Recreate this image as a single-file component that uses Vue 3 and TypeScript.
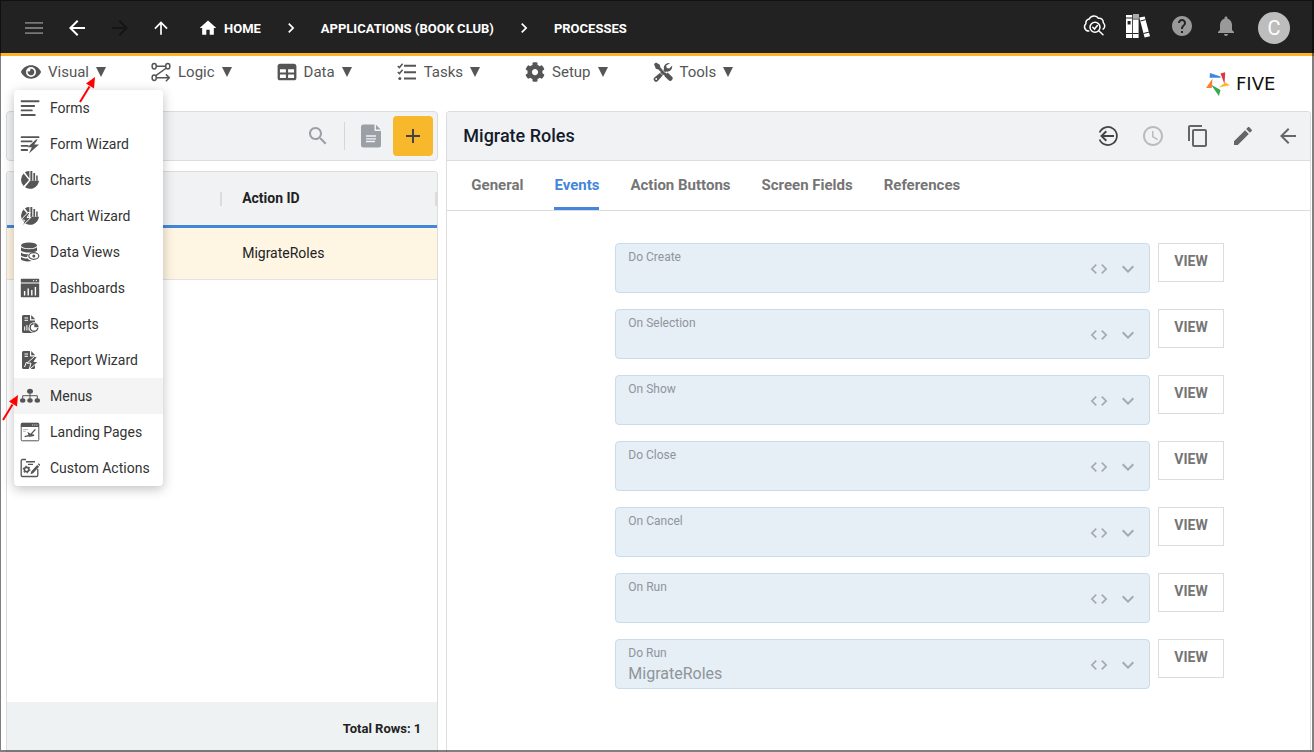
<script setup lang="ts">
import { ref } from 'vue'

interface MenuEntry {
  label: string
  icon: string
}

interface EventField {
  id: string
  label: string
  value: string
}

const eye =
  '<svg x="0" y="0" width="20" height="20" viewBox="0 0 576 512"><path d="M572.52 241.4C518.29 135.59 410.93 64 288 64S57.68 135.64 3.48 241.41a32.35 32.35 0 0 0 0 29.19C57.71 376.41 165.07 448 288 448s230.32-71.64 284.52-177.41a32.35 32.35 0 0 0 0-29.19zM288 400a144 144 0 1 1 144-144 143.93 143.93 0 0 1-144 144zm0-240a95.31 95.31 0 0 0-25.31 3.79 47.85 47.85 0 0 1-66.9 66.9A95.78 95.78 0 1 0 288 160z"/></svg>'
const table =
  '<svg x="0" y="0" width="20" height="20" viewBox="-16 0 544 512"><path d="M448 32H64C28 32 0 60 0 96v320c0 36 28 64 64 64h384c36 0 64-28 64-64V96c0-36-28-64-64-64zM226 416H64v-90h162v90zm0-148H64v-90h162v90zm222 148H286v-90h162v90zm0-148H286v-90h162v90z"/></svg>'
const cog =
  '<svg x="0" y="0" width="20" height="20" viewBox="0 0 512 512"><path d="M487.4 315.7l-42.6-24.6c4.3-23.2 4.3-47 0-70.2l42.6-24.6c4.9-2.8 7.1-8.6 5.5-14-11.1-35.6-30-67.8-54.7-94.6-3.8-4.1-10-5.1-14.8-2.3L380.8 110c-17.9-15.4-38.5-27.3-60.8-35.1V25.8c0-5.6-3.9-10.5-9.4-11.7-36.7-8.2-74.3-7.8-109.2 0-5.5 1.2-9.4 6.1-9.4 11.7V75c-22.2 7.9-42.8 19.8-60.8 35.1L88.7 85.5c-4.9-2.8-11-1.9-14.8 2.3-24.7 26.7-43.6 58.9-54.7 94.6-1.7 5.4.6 11.2 5.5 14L67.3 221c-4.3 23.2-4.3 47 0 70.2l-42.6 24.6c-4.9 2.8-7.1 8.6-5.5 14 11.1 35.6 30 67.8 54.7 94.6 3.8 4.1 10 5.1 14.8 2.3l42.6-24.6c17.9 15.4 38.5 27.3 60.8 35.1v49.2c0 5.6 3.9 10.5 9.4 11.7 36.7 8.2 74.3 7.8 109.2 0 5.5-1.2 9.4-6.1 9.4-11.7v-49.2c22.2-7.9 42.8-19.8 60.8-35.1l42.6 24.6c4.9 2.8 11 1.9 14.8-2.3 24.7-26.7 43.6-58.9 54.7-94.6 1.5-5.5-.7-11.3-5.6-14.1zM256 336c-44.1 0-80-35.9-80-80s35.9-80 80-80 80 35.9 80 80-35.9 80-80 80z"/></svg>'
const logic =
  '<g fill="none" stroke="currentColor" stroke-width="1.5"><ellipse cx="3.2" cy="4.2" rx="2.1" ry="2.7"/><ellipse cx="16.8" cy="4.2" rx="2.1" ry="2.7"/><ellipse cx="3.2" cy="15.8" rx="2.1" ry="2.7"/><path d="M5.3 4.2h9.4M15.4 6L4.8 13.6M5.3 15.8h12.4M14.9 12.4l3.4 3.4-3.4 3.4"/></g>'
const tasks =
  '<path d="M7 2.8h12v2H7zM7 9.2h12v2H7zM7 15.4h12v2H7z"/><circle cx="2.8" cy="16.4" r="1.5"/><path d="M.8 4l1.6 1.6 3.2-3.8M.8 10l1.6 1.6 3.2-3.8" fill="none" stroke="currentColor" stroke-width="1.5"/>'
const tools =
  '<path d="M1 2l2-1.6 3.8 2.4.6 2.6 9 9-2 2-9-9-2.6-.6z"/><path d="M12.6 12.4l2-2 4.2 4.2a2.3 2.3 0 0 1-3.2 3.6l-4-4z"/><path d="M17 1.2a5 5 0 0 0-6 6.2L1.4 15.6a2.4 2.4 0 0 0 3.4 3.4l8.4-9.4a5 5 0 0 0 5.9-5.9l-2.9 2.9-2.5-.5-.5-2.5z"/><path d="M6.6 10.2l3.4 3.4M9.2 7.6l3.4 3.4" stroke="#fff" stroke-width=".7"/><circle cx="3.2" cy="17" r=".9" fill="#fff"/>'

const bolt = 'M16 5.5L7.5 13.2h4.3L9 19.5l10-9h-4.8l3.5-5z'
const pie =
  '<path d="M9 10L3.6 3.4A9 9 0 0 0 3.6 16z"/><path d="M10.2 10.8L5 17.3A9 9 0 0 0 19 10.8z"/><path d="M4.9 2.3A9 9 0 0 1 9.4 1v7.4zM10.4 1h1.9v9.8h-1.9zM13.4 3h1.7v7.8h-1.7zM16.2 5.4h1.5v5.4h-1.5z"/>'
const page =
  '<path d="M2 2.5A1.5 1.5 0 0 1 3.5 1H10v5.5h5V18a1 1 0 0 1-1 1H3.5A1.5 1.5 0 0 1 2 17.5z"/><path d="M11.2 1l4 4.3h-4z"/><path d="M4.5 4h3.5M4.5 6.3h3.5" stroke="#fff" stroke-width="1"/>'

const visualMenu: MenuEntry[] = [
  {
    label: 'Forms',
    icon: '<path d="M1.6 3.2h17M1.6 8h12.6M1.6 12.4h10.2M1.6 17h13.2" stroke="currentColor" stroke-width="1.9" stroke-linecap="round"/>',
  },
  {
    label: 'Form Wizard',
    icon: `<path d="M1.6 3.2h17M1.6 7.4h10M1.6 11.8h6.2M1.6 16h5.6" stroke="currentColor" stroke-width="1.8" stroke-linecap="round"/><path d="${bolt}"/>`,
  },
  { label: 'Charts', icon: pie },
  {
    label: 'Chart Wizard',
    icon: `${pie}<path d="M8 6.5L.8 14h3.6l-2 6 8.4-8.5H7l3.2-5z" stroke="#fff" stroke-width="1"/>`,
  },
  {
    label: 'Data Views',
    icon: '<ellipse cx="9" cy="3.4" rx="8" ry="2.9"/><path d="M1 5.2c2 2.6 14 2.6 16 0v3.6c-2.5 2.4-13.5 2.4-16 0zM1 10.4c2 1.5 5 2 7.5 1.9-1 1-1.5 2-1.3 2.6C4.5 15 2 14.4 1 13.4zM1 15c2 1.3 4.5 1.6 6.8 1.5 1 1.3 2.2 2.1 4 2.5C7 20 2.5 19.2 1 17.6z"/><ellipse cx="13.8" cy="14" rx="5" ry="3.3" fill="none" stroke="currentColor" stroke-width="1.2"/><circle cx="13.8" cy="14" r="1.5"/>',
  },
  {
    label: 'Dashboards',
    icon: '<path d="M1.5.8h17a.7.7 0 0 1 .7.7v3H.8v-3a.7.7 0 0 1 .7-.7zM.8 5.6h18.4v13a.7.7 0 0 1-.7.7h-17a.7.7 0 0 1-.7-.7z"/><path d="M4.6 17.5V13M8.2 17.5v-7M11.8 17.5V12M15.4 17.5V9" stroke="#fff" stroke-width="1.4"/><path d="M13 2.7h1.2M15.8 2.7h1.2" stroke="#fff" stroke-width="1"/>',
  },
  {
    label: 'Reports',
    icon: `${page}<path d="M4.7 16.5v-4M6.9 16.5V11M9 16.5v-3" stroke="#fff" stroke-width="1"/><circle cx="14" cy="13.5" r="5.3" fill="#fff"/><circle cx="14" cy="13.5" r="3.8" fill="none" stroke="currentColor" stroke-width="1.4"/><path d="M14 13.5V8.6a5 5 0 0 1 5 4.9z" stroke="#fff" stroke-width=".6"/>`,
  },
  {
    label: 'Report Wizard',
    icon: `${page}<path d="M4.5 17l2-5" stroke="#fff" stroke-width="1"/><path d="M14.5 6.5L7 13.2h4L9 19.8l9.5-8.3H14l3.5-5z" stroke="#fff" stroke-width="1"/>`,
  },
  {
    label: 'Menus',
    icon: '<ellipse cx="10" cy="5.2" rx="3" ry="2.5"/><ellipse cx="2.7" cy="14.5" rx="2.7" ry="2.2"/><ellipse cx="10" cy="14.5" rx="2.7" ry="2.2"/><ellipse cx="17.3" cy="14.5" rx="2.7" ry="2.2"/><path d="M10 6v7M2.7 13V9.7h14.6V13" fill="none" stroke="currentColor" stroke-width="1"/>',
  },
  {
    label: 'Landing Pages',
    icon: '<rect x="1.2" y="1.2" width="17.6" height="17.6" rx="1" fill="none" stroke="currentColor" stroke-width="1"/><path d="M1 1h18v4H1z"/><path d="M12 3h1.2M14.2 3h1.2M16.4 3h1.2" stroke="#fff" stroke-width=".8"/><path d="M3 7.5h5M3 9.3h3" stroke="currentColor" stroke-opacity=".5" stroke-width=".8"/><path d="M15.4 7.4L10.6 12.6l-2-1.2.6 2L4.6 14.6M10.6 12.8l3.4.4-5 1.2" fill="none" stroke="currentColor" stroke-width="1.4"/>',
  },
  {
    label: 'Custom Actions',
    icon: '<path d="M6 1.5H2.5a1.3 1.3 0 0 0-1.3 1.3v14.4a1.3 1.3 0 0 0 1.3 1.3h14a1.3 1.3 0 0 0 1.3-1.3V11" fill="none" stroke="currentColor" stroke-width="1.3"/><path d="M6 3.8h9M8 6.4h5" stroke="currentColor" stroke-width="1.4"/><circle cx="6.6" cy="11.6" r="2.2" fill="none" stroke="currentColor" stroke-width="1.6"/><circle cx="6.6" cy="11.6" r="3.3" fill="none" stroke="currentColor" stroke-width="1.2" stroke-dasharray="1.5 1.95"/><path d="M10.5 16.2l.7-2.7 6-6.6 1.9 1.8-6 6.6zM17.8 6.2l.9-.9 1.7 1.7-.8.9z"/>',
  },
]

const mainMenu: MenuEntry[] = [
  { label: 'Visual', icon: eye },
  { label: 'Logic', icon: logic },
  { label: 'Data', icon: table },
  { label: 'Tasks', icon: tasks },
  { label: 'Setup', icon: cog },
  { label: 'Tools', icon: tools },
]

const openMenu = ref('Visual')
const hoveredEntry = ref('Menus')

const tabs = ['General', 'Events', 'Action Buttons', 'Screen Fields', 'References']
const activeTab = ref('Events')

const fields = ref<EventField[]>([
  { id: 'do-create', label: 'Do Create', value: '' },
  { id: 'on-selection', label: 'On Selection', value: '' },
  { id: 'on-show', label: 'On Show', value: '' },
  { id: 'do-close', label: 'Do Close', value: '' },
  { id: 'on-cancel', label: 'On Cancel', value: '' },
  { id: 'on-run', label: 'On Run', value: '' },
  { id: 'do-run', label: 'Do Run', value: 'MigrateRoles' },
])

const rows = ref([{ title: '', actionId: 'MigrateRoles' }])
</script>

<template>
  <div class="app">
    <header class="topbar">
      <div class="nav-icons">
        <button class="icon-btn dim" aria-label="Menu">
          <svg width="24" height="24" viewBox="0 0 24 24"><path d="M3 6h18v1.8H3zM3 11.1h18v1.8H3zM3 16.2h18V18H3z" /></svg>
        </button>
        <button class="icon-btn" aria-label="Back">
          <svg width="24" height="24" viewBox="0 0 24 24"><path d="M20 11H7.83l5.59-5.59L12 4l-8 8 8 8 1.41-1.41L7.83 13H20v-2z" /></svg>
        </button>
        <button class="icon-btn off" aria-label="Forward">
          <svg width="24" height="24" viewBox="0 0 24 24"><path d="M12 4l-1.41 1.41L16.17 11H4v2h12.17l-5.58 5.59L12 20l8-8z" /></svg>
        </button>
        <button class="icon-btn" aria-label="Up">
          <svg width="20" height="20" viewBox="0 0 24 24"><path d="M4 12l1.41 1.41L11 7.83V20h2V7.83l5.58 5.59L20 12l-8-8-8 8z" /></svg>
        </button>
      </div>
      <nav class="crumbs" aria-label="Breadcrumb">
        <a href="#home">
          <svg width="20" height="20" viewBox="0 0 24 24"><path d="M10 20v-6h4v6h5v-8h3L12 3 2 12h3v8z" /></svg>
          HOME
        </a>
        <svg width="20" height="20" viewBox="0 0 24 24"><path d="M10 6L8.59 7.41 13.17 12l-4.58 4.59L10 18l6-6z" /></svg>
        <a href="#applications">APPLICATIONS (BOOK CLUB)</a>
        <svg width="20" height="20" viewBox="0 0 24 24"><path d="M10 6L8.59 7.41 13.17 12l-4.58 4.59L10 18l6-6z" /></svg>
        <a href="#processes">PROCESSES</a>
      </nav>
      <div class="account">
        <button class="icon-btn" aria-label="Inspect cloud">
          <svg width="24" height="24" viewBox="0 0 24 24" fill="none" stroke="currentColor" stroke-width="1.5" stroke-linecap="round">
            <path d="M6.8 17A4.2 4.2 0 0 1 3.9 9.7 4.3 4.3 0 0 1 7.2 5C9 1.3 14.6 1.1 16.4 4.3c3-.4 5 1.400 4.9 4.4 1.900 1.600 2 5-.2 6.400" />
            <circle cx="13" cy="13.2" r="5" />
            <path d="M17 17l4 3.8M10.8 13.2l1.7 1.8 2.9-3.5" />
          </svg>
        </button>
        <button class="icon-btn" aria-label="Library">
          <svg width="24" height="24" viewBox="0 0 24 24">
            <path d="M0 1h6.2v23H0zM7 0h5.600v24H7zM13.3 3.600l5.400-1.200L24 22.200l-5.400 1.400z" />
            <path d="M0 4h6.2M0 19.5h6.2M7 5h5.6M7 19.5h5.6M14.3 7l5.4-1.4M17.4 19.5l5.6-1.4" stroke="#222" stroke-width="1" />
            <path d="M1.6 7h3v3.5h-3z" fill="#222" />
            <path d="M7 0h5.6v4H7z" fill="#aaa" />
          </svg>
        </button>
        <button class="icon-btn soft" aria-label="Help">
          <svg width="24" height="24" viewBox="0 0 24 24"><path d="M12 2C6.48 2 2 6.48 2 12s4.48 10 10 10 10-4.48 10-10S17.52 2 12 2zm1 17h-2v-2h2v2zm2.07-7.75l-.9.92C13.45 12.9 13 13.5 13 15h-2v-.5c0-1.1.45-2.1 1.17-2.83l1.24-1.26c.37-.36.59-.86.59-1.41 0-1.1-.9-2-2-2s-2 .9-2 2H8c0-2.21 1.79-4 4-4s4 1.79 4 4c0 .88-.36 1.68-.93 2.25z" /></svg>
        </button>
        <button class="icon-btn soft" aria-label="Notifications">
          <svg width="24" height="24" viewBox="0 0 24 24"><path d="M12 22c1.1 0 2-.9 2-2h-4c0 1.1.89 2 2 2zm6-6v-5c0-3.07-1.64-5.64-4.5-6.32V4c0-.83-.67-1.5-1.5-1.5s-1.5.67-1.5 1.5v.68C7.63 5.36 6 7.92 6 11v5l-2 2v1h16v-1l-2-2z" /></svg>
        </button>
        <button class="avatar">C</button>
      </div>
    </header>

    <div class="menubar">
      <nav class="main-menu" aria-label="Main">
        <div v-for="item in mainMenu" :key="item.label" class="main-item">
          <button class="main-btn" @click="openMenu = item.label">
            <svg width="20" height="20" viewBox="0 0 20 20" v-html="item.icon"></svg>
            <span>{{ item.label }}</span>
            <svg width="10" height="10" viewBox="0 0 10 10"><path d="M0 0h10L5 10z" /></svg>
          </button>
          <template v-if="item.label === 'Visual' && openMenu === 'Visual'">
            <ul class="dropdown">
              <li v-for="entry in visualMenu" :key="entry.label">
                <button
                  class="entry"
                  :class="{ hovered: hoveredEntry === entry.label }"
                  @mouseenter="hoveredEntry = entry.label"
                >
                  <svg width="20" height="20" viewBox="0 0 20 20" v-html="entry.icon"></svg>
                  {{ entry.label }}
                </button>
                <svg v-if="entry.label === 'Menus'" class="pointer at-entry" width="18" height="26" viewBox="0 0 18 26">
                  <path d="M2 25L11.5 9.5" stroke="#f00" stroke-width="2" />
                  <path d="M17 0L8 6.5l8 5z" fill="#f00" />
                </svg>
              </li>
            </ul>
            <svg class="pointer at-caret" width="18" height="26" viewBox="0 0 18 26">
              <path d="M2 25L11.5 9.5" stroke="#f00" stroke-width="2" />
              <path d="M17 0L8 6.5l8 5z" fill="#f00" />
            </svg>
          </template>
        </div>
      </nav>
      <div class="brand">
        <svg width="24" height="24" viewBox="0 0 24 24">
          <path d="M4 1l10.5 3.5v1.3H3.6z" fill="#3f86dc" />
          <path d="M14.5 1.5L19.2.2l-.7 12z" fill="#e5343a" />
          <path d="M12.8 15.5l6.5-5 4.7 2.8z" fill="#fbb829" />
          <path d="M5 12.5l9.5 5.5-1.6 6z" fill="#37a853" />
          <path d="M0 16L6.5 6.500 5.8 16z" fill="#f58233" />
        </svg>
        <span class="wordmark">FIVE</span>
      </div>
    </div>

    <main class="workspace">
      <section class="list-pane">
        <div class="search-card">
          <input type="search" aria-label="Search actions" />
          <button class="icon-btn muted" aria-label="Search">
            <svg width="24" height="24" viewBox="0 0 24 24"><path d="M15.5 14h-.79l-.28-.27C15.41 12.59 16 11.11 16 9.5 16 5.91 13.09 3 9.5 3S3 5.91 3 9.5 5.91 16 9.5 16c1.61 0 3.09-.59 4.23-1.57l.27.28v.79l5 4.99L20.49 19l-4.99-5zm-6 0C7.01 14 5 11.99 5 9.5S7.01 5 9.5 5 14 7.01 14 9.5 11.99 14 9.5 14z" /></svg>
          </button>
          <span class="divider"></span>
          <button class="icon-btn muted" aria-label="Document">
            <svg width="20" height="24" viewBox="0 0 20 24">
              <path d="M2.5.5h11V7H20v14a2.5 2.5 0 0 1-2.5 2.5h-15A2.5 2.5 0 0 1 0 21V3A2.5 2.5 0 0 1 2.5.5zM15 .8l4.600 4.700H15z" />
              <path d="M5 12h10M5 14.8h10M5 17.5h9" stroke="#f1f2f4" stroke-width="1.3" />
            </svg>
          </button>
          <button class="add" aria-label="Add">
            <svg width="14" height="14" viewBox="0 0 14 14"><path d="M6 0h2v6h6v2H8v6H6V8H0V6h6z" /></svg>
          </button>
        </div>

        <div class="table-card">
          <table>
            <thead>
              <tr>
                <th scope="col"></th>
                <th scope="col">Action ID</th>
              </tr>
            </thead>
            <tbody>
              <tr v-for="row in rows" :key="row.actionId">
                <td>{{ row.title }}</td>
                <td>{{ row.actionId }}</td>
              </tr>
            </tbody>
          </table>
          <footer>Total Rows: {{ rows.length }}</footer>
        </div>
      </section>

      <section class="detail-pane">
        <header class="detail-head">
          <h1>Migrate Roles</h1>
          <div class="detail-actions">
            <button class="icon-btn strong" aria-label="Restore">
              <svg width="24" height="24" viewBox="0 0 24 24" fill="none" stroke="currentColor" stroke-width="1.8">
                <path d="M3.6 8.5a9 9 0 1 1 0 7" />
                <path d="M18 12H6M10.3 7.2L5.5 12l4.8 4.8" stroke-width="2" />
              </svg>
            </button>
            <button class="icon-btn faded" aria-label="History">
              <svg width="24" height="24" viewBox="0 0 24 24"><path d="M11.99 2C6.47 2 2 6.48 2 12s4.47 10 9.99 10C17.52 22 22 17.52 22 12S17.52 2 11.99 2zM12 20c-4.42 0-8-3.58-8-8s3.58-8 8-8 8 3.58 8 8-3.58 8-8 8zM12.5 7H11v6l5.25 3.15.75-1.23-4.5-2.67z" /></svg>
            </button>
            <button class="icon-btn" aria-label="Copy">
              <svg width="24" height="24" viewBox="0 0 24 24"><path d="M16 1H4c-1.1 0-2 .9-2 2v14h2V3h12V1zm3 4H8c-1.1 0-2 .9-2 2v14c0 1.1.9 2 2 2h11c1.1 0 2-.9 2-2V7c0-1.1-.9-2-2-2zm0 16H8V7h11v14z" /></svg>
            </button>
            <button class="icon-btn" aria-label="Edit">
              <svg width="24" height="24" viewBox="0 0 24 24"><path d="M3 17.25V21h3.75L17.81 9.94l-3.75-3.75L3 17.25zM20.71 7.04c.39-.39.39-1.02 0-1.41l-2.34-2.34c-.39-.39-1.02-.39-1.41 0l-1.83 1.83 3.75 3.75 1.83-1.83z" /></svg>
            </button>
            <button class="icon-btn" aria-label="Close">
              <svg width="24" height="24" viewBox="0 0 24 24"><path d="M20 11H7.83l5.59-5.59L12 4l-8 8 8 8 1.41-1.41L7.83 13H20v-2z" /></svg>
            </button>
          </div>
        </header>

        <div class="tabs" role="tablist">
          <button
            v-for="tab in tabs"
            :key="tab"
            role="tab"
            :aria-selected="activeTab === tab"
            :class="{ active: activeTab === tab }"
            @click="activeTab = tab"
          >
            {{ tab }}
          </button>
        </div>

        <form class="events" @submit.prevent>
          <div v-for="field in fields" :key="field.id" class="event-row">
            <div class="field">
              <div class="field-body">
                <label :for="field.id">{{ field.label }}</label>
                <select :id="field.id" v-model="field.value">
                  <option value=""></option>
                  <option value="MigrateRoles">MigrateRoles</option>
                </select>
              </div>
              <button type="button" class="icon-btn" aria-label="Edit code">
                <svg width="20" height="20" viewBox="0 0 24 24"><path d="M9.4 16.6L4.8 12l4.6-4.6L8 6l-6 6 6 6 1.4-1.4zm5.2 0l4.6-4.6-4.6-4.6L16 6l6 6-6 6-1.4-1.4z" /></svg>
              </button>
              <svg class="chevron" width="24" height="24" viewBox="0 0 24 24"><path d="M7.41 8.59L12 13.17l4.59-4.58L18 10l-6 6-6-6z" /></svg>
            </div>
            <button type="button" class="view">VIEW</button>
          </div>
        </form>
      </section>
    </main>
  </div>
</template>

<style>
body {
  margin: 0;
  background: #fff;
}
</style>

<style scoped>
* {
  box-sizing: border-box;
}

.app {
  position: relative;
  display: flex;
  flex-direction: column;
  min-height: 100vh;
  font-family: Roboto, 'Liberation Sans', sans-serif;
  font-size: 14px;
  color: #222;
  background: #fff;
}

.app::after {
  content: '';
  position: absolute;
  inset: 0;
  border: 1px solid rgba(0, 0, 0, 0.5);
  border-right-width: 2px;
  border-bottom-width: 2px;
  pointer-events: none;
}

button {
  padding: 0;
  border: 0;
  background: none;
  font: inherit;
  color: inherit;
  cursor: pointer;
}

svg {
  display: block;
  flex: none;
  fill: currentColor;
}

svg[fill='none'] {
  fill: none;
}

.icon-btn {
  display: flex;
  flex: none;
}

/* Top bar */
.topbar {
  display: flex;
  align-items: center;
  height: 56px;
  padding: 3px 24px 0 22px;
  background: #222;
  border-bottom: 3px solid #f9b52b;
  color: #fff;
}

.nav-icons {
  display: flex;
  align-items: center;
  gap: 19px;
}

.dim {
  color: #777;
}

.off {
  color: #151515;
}

.soft {
  color: #999;
}

.crumbs {
  display: flex;
  align-items: center;
  gap: 20px;
  margin-left: 27px;
  font-size: 13px;
  font-weight: 700;
}

.crumbs a {
  display: flex;
  align-items: center;
  gap: 6px;
  color: inherit;
  text-decoration: none;
}

.account {
  display: flex;
  align-items: center;
  gap: 20px;
  margin-left: auto;
}

.account .icon-btn {
  margin-bottom: 4px;
}

.avatar {
  width: 32px;
  height: 32px;
  border-radius: 50%;
  background: #bdbdbd;
  font-size: 20px;
}

/* Menu bar */
.menubar {
  display: flex;
  justify-content: space-between;
  height: 55px;
  padding: 6px 20px 6px 21px;
}

.main-menu {
  display: flex;
  align-items: flex-start;
  gap: 45px;
}

.main-item {
  position: relative;
}

.main-btn {
  display: flex;
  align-items: center;
  gap: 7px;
  height: 20px;
  font-size: 15px;
  line-height: 20px;
  color: #555;
}

.dropdown {
  position: absolute;
  z-index: 2;
  top: 28px;
  left: -7px;
  min-width: 149px;
  margin: 0;
  padding: 0;
  list-style: none;
  background: #fff;
  border-radius: 4px;
  box-shadow: 0 3px 12px rgba(0, 0, 0, 0.25);
}

.dropdown li {
  position: relative;
}

.entry {
  display: flex;
  align-items: center;
  gap: 10px;
  width: 100%;
  height: 36px;
  padding: 0 12px 0 6px;
  white-space: nowrap;
  color: #333;
}

.entry svg {
  color: #555;
}

.entry.hovered {
  background: #f4f4f4;
}

.pointer {
  position: absolute;
  z-index: 3;
  pointer-events: none;
}

.at-caret {
  left: 57px;
  top: 15px;
}

.at-entry {
  left: -13px;
  top: 17px;
}

.brand {
  display: flex;
  align-items: center;
  gap: 6px;
  color: #111;
}

.wordmark {
  min-width: 58px;
  font-family: 'DejaVu Sans', sans-serif;
  font-size: 18px;
}

/* Workspace */
.workspace {
  display: grid;
  flex: 1;
  grid-template-columns: 1fr 2fr;
  gap: 8px;
  padding: 0 3px 0 6px;
}

.list-pane {
  display: flex;
  flex-direction: column;
  gap: 10px;
  min-width: 0;
}

.search-card {
  display: flex;
  align-items: center;
  height: 50px;
  padding: 0 4px;
  background: #f1f2f4;
  border: 1px solid #dcdcdc;
  border-radius: 4px;
}

.search-card input {
  flex: 1;
  min-width: 0;
  height: 40px;
  border: 0;
  outline: 0;
  background: none;
  font: inherit;
}

.muted {
  color: #9aa0a6;
}

.divider {
  width: 1px;
  height: 28px;
  margin: 0 16px 0 14px;
  background: #d4d6d8;
}

.add {
  display: grid;
  place-items: center;
  width: 40px;
  height: 40px;
  margin-left: 12px;
  border-radius: 4px;
  background: #f8b82b;
  color: #444;
}

.table-card {
  display: flex;
  flex: 1;
  flex-direction: column;
  justify-content: space-between;
  border: 1px solid #dcdcdc;
  border-bottom: 0;
  border-radius: 4px 4px 0 0;
  overflow: hidden;
}

table {
  width: 100%;
  table-layout: fixed;
  border-collapse: separate;
  border-spacing: 0;
  text-align: left;
}

th,
td {
  padding: 0 20px 2px;
}

th {
  height: 56px;
  background: linear-gradient(#dcdcdc, #dcdcdc) right center / 2px 14px no-repeat #f1f2f4;
  border-bottom: 3px solid #4487d8;
  font-weight: 700;
}

td {
  height: 52px;
  background: #fff5e3;
  border-bottom: 1px solid #e2e2e2;
}

.table-card footer {
  height: 50px;
  padding: 0 16px;
  background: #eef2f3;
  font-size: 13px;
  font-weight: 700;
  line-height: 53px;
  text-align: right;
}

.detail-pane {
  min-width: 0;
  border: 1px solid #dcdcdc;
  border-bottom: 0;
  border-radius: 4px 4px 0 0;
  overflow: hidden;
}

.detail-head {
  display: flex;
  align-items: center;
  justify-content: space-between;
  height: 49px;
  padding: 0 10px 0 16px;
  background: #f1f2f4;
  border-bottom: 1px solid #dcdcdc;
}

h1 {
  margin: 0;
  padding-bottom: 2px;
  font-size: 18px;
  font-weight: 500;
  color: #141c2c;
}

.detail-actions {
  display: flex;
  gap: 21px;
  color: #666;
}

.strong {
  color: #444;
}

.faded {
  color: #bbb;
}

.tabs {
  display: flex;
  gap: 31px;
  height: 50px;
  padding: 0 24px;
  border-bottom: 1px solid #dcdcdc;
}

.tabs button {
  padding-top: 1px;
  border-bottom: 3px solid transparent;
  border-radius: 2px 2px 0 0;
  font-size: 15px;
  font-weight: 700;
  color: #757575;
}

.tabs .active {
  border-bottom-color: #4487d8;
  color: #4487d8;
}

.events {
  display: flex;
  flex-direction: column;
  gap: 16px;
  padding: 32px 86px 32px 168px;
}

.event-row {
  display: flex;
  align-items: flex-start;
  gap: 8px;
}

.field {
  display: flex;
  flex: 1;
  align-items: center;
  gap: 7px;
  height: 50px;
  padding: 2px 9px 0 12px;
  background: #e6eef6;
  border: 1px solid #c9dcee;
  border-radius: 4px;
  color: #a3aab1;
}

.field-body {
  display: flex;
  flex: 1;
  flex-direction: column;
  height: 100%;
  padding-top: 3px;
}

label {
  font-size: 12px;
  line-height: 16px;
  color: #8f959b;
}

select {
  appearance: none;
  height: 24px;
  padding: 0;
  border: 0;
  outline: 0;
  background: none;
  font: inherit;
  font-size: 16px;
  color: #8f959b;
}

.chevron {
  pointer-events: none;
}

.view {
  width: 66px;
  height: 39px;
  padding-bottom: 3px;
  border: 1px solid #dcdcdc;
  font-weight: 700;
  color: #757575;
}
</style>
